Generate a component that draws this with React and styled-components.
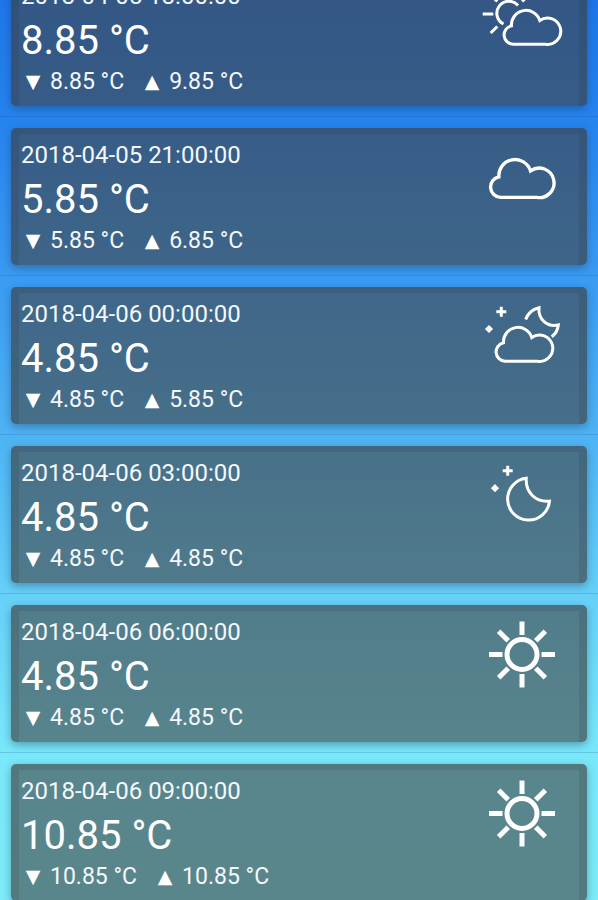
import React from "react";
import styled, { createGlobalStyle } from "styled-components";

const GlobalStyle = createGlobalStyle`
* {
  box-sizing: border-box;
}
body {
  margin: 0;
  font-family: Roboto, "Liberation Sans", sans-serif;
  color: #f4f8fc;
}
`;

const Screen = styled.main`
  display: flex;
  flex-direction: column;
  justify-content: flex-end;
  height: 100vh;
  overflow: hidden;
  background: linear-gradient(
    #1f76e8 0%,
    #2583ee 13%,
    #3a9bf2 31%,
    #4fb4f4 49%,
    #66d0f8 66%,
    #79e8fa 84%,
    #7cecf8 100%
  );
`;

const List = styled.ul`
  list-style: none;
  margin: 0 0 -1px;
  padding: 0;
`;

const Row = styled.li`
  padding: 11px 11px 10px;
  overflow: hidden;
  border-bottom: 1px solid rgba(30, 70, 130, 0.2);

  &:last-child {
    padding-bottom: 0;
    border-bottom: none;
  }
`;

const Card = styled.article`
  display: flex;
  justify-content: space-between;
  align-items: flex-start;
  border: solid rgba(40, 40, 40, 0.14);
  border-width: 6px 8px 0;
  border-radius: 5px;
  background: rgba(66, 66, 66, 0.6) border-box;
  box-shadow: 0 3px 9px rgba(30, 50, 80, 0.4);
`;

const Details = styled.div`
  padding: 5px 2px 12px;
`;

const Time = styled.time`
  display: block;
  font-size: 24px;
  line-height: 32px;
`;

const Temperature = styled.div`
  font-size: 40px;
  line-height: 58px;
  color: white;
`;

const Range = styled.div`
  display: flex;
  gap: 16px;
  font-size: 23px;
  line-height: 24px;
`;

const Limit = styled.span`
  display: flex;
  gap: 5px;
`;

const Arrow = styled.span`
  width: 24px;
  text-align: center;
  font-family: "DejaVu Sans", sans-serif;
  font-size: 19px;
  line-height: 22px;
  color: white;
`;

const Icon = styled.svg`
  flex: none;
  width: 80px;
  height: 80px;
  margin: 4px 17px 0 0;
  overflow: visible;
  fill: none;
  stroke: white;
  stroke-width: ${(props) => props.$weight || 3};
`;

const cloud =
  "M33 65.2H65.3A13.2 13.2 0 1 0 59.8 41.5A14.5 14.5 0 0 0 31.5 46.8A9.3 9.3 0 0 0 33 65.2Z";

const CloudSun = () => (
  <Icon viewBox="0 0 80 80" aria-hidden="true">
    <path d={cloud} transform="translate(-2 0)" />
    <path d="M21.5 45A12 12 0 1 1 36 26.5" />
    <path d="M.7 35H11.3M15.3 47.5L8.7 54M15.3 22.5L8.7 16M28 18V8M40.2 22.5L46.5 16" />
  </Icon>
);

const Cloud = () => (
  <Icon viewBox="0 0 80 80" aria-hidden="true">
    <path d={cloud} transform="translate(-18.4 -13.6) scale(1.12)" />
  </Icon>
);

const CloudMoon = () => (
  <Icon viewBox="0 0 80 80" aria-hidden="true">
    <path d={cloud} transform="translate(-10 -1)" />
    <path d="M43.7 22.5C45.7 16.5 50 12.5 57 10.7C56 22.5 65 30.3 76.3 28C75.8 32.5 73.5 37 69.7 39.7" />
    <path d="M19.3 9.7V19.7M14.3 14.7H24.3" />
    <path d="M7 30L9 32L7 34L5 32Z" fill="white" />
  </Icon>
);

const Moon = () => (
  <Icon viewBox="0 0 80 80" aria-hidden="true">
    <path d="M44.2 22.2A21 21 0 1 0 67.5 45.2C53.5 46.5 43.5 36.5 44.2 22.2Z" />
    <path d="M25.7 9.8V19.8M20.7 14.8H30.7" />
    <path d="M13 30.2L15 32.2L13 34.2L11 32.2Z" fill="white" />
  </Icon>
);

const Sun = () => (
  <Icon viewBox="0 0 80 80" $weight={5} aria-hidden="true">
    <circle cx="40" cy="39.5" r="15" />
    {[0, 45, 90, 135, 180, 225, 270, 315].map((angle) => (
      <path key={angle} d="M40 6.5V20" transform={`rotate(${angle} 40 39.5)`} />
    ))}
  </Icon>
);

const forecast = [
  { time: "2018-04-05 18:00:00", temp: "8.85", min: "8.85", max: "9.85", Weather: CloudSun },
  { time: "2018-04-05 21:00:00", temp: "5.85", min: "5.85", max: "6.85", Weather: Cloud },
  { time: "2018-04-06 00:00:00", temp: "4.85", min: "4.85", max: "5.85", Weather: CloudMoon },
  { time: "2018-04-06 03:00:00", temp: "4.85", min: "4.85", max: "4.85", Weather: Moon },
  { time: "2018-04-06 06:00:00", temp: "4.85", min: "4.85", max: "4.85", Weather: Sun },
  { time: "2018-04-06 09:00:00", temp: "10.85", min: "10.85", max: "10.85", Weather: Sun },
];

function App() {
  return (
    <>
      <GlobalStyle />
      <Screen>
        <List>
          {forecast.map(({ time, temp, min, max, Weather }) => (
            <Row key={time}>
              <Card>
                <Details>
                  <Time>{time}</Time>
                  <Temperature>{temp} °C</Temperature>
                  <Range>
                    <Limit><Arrow>▼</Arrow>{min} °C</Limit>
                    <Limit><Arrow>▲</Arrow>{max} °C</Limit>
                  </Range>
                </Details>
                <Weather />
              </Card>
            </Row>
          ))}
        </List>
      </Screen>
    </>
  );
}

export default App;
